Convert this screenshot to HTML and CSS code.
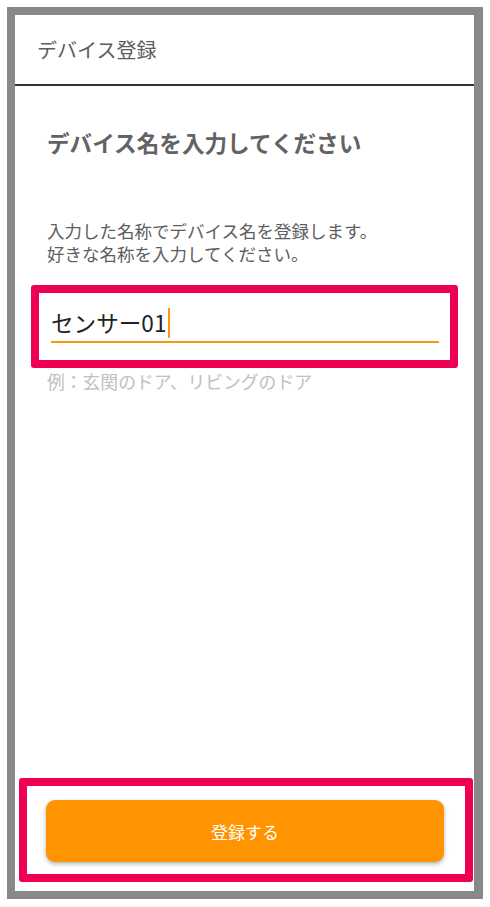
FILE: index.html
```html
<!DOCTYPE html>
<html lang="ja">
<head>
<meta charset="utf-8">
<title>デバイス登録</title>
<link rel="stylesheet" href="styles.css">
</head>
<body>
<div class="frame">
  <div class="screen">
    <header class="appbar">デバイス登録</header>
    <main class="content">
      <h1 class="heading">デバイス名を入力してください</h1>
      <div class="desc">
        <p class="desc-line">入力した名称でデバイス名を登録します。</p>
        <p class="desc-line">好きな名称を入力してください。</p>
      </div>
      <div class="mark field-mark">
        <div class="field">
          <span class="value">センサー01</span><span class="caret"></span>
        </div>
      </div>
      <p class="hint">例：玄関のドア、リビングのドア</p>
    </main>
    <div class="mark footer-mark">
      <button class="submit" type="button">登録する</button>
    </div>
  </div>
</div>
</body>
</html>
```

FILE: styles.css
```css
* { box-sizing: border-box; }
html, body {
  margin: 0;
  padding: 0;
  background: #ffffff;
}
body {
  width: 490px;
  height: 907px;
  font-family: "Noto Sans CJK JP", "Noto Sans", sans-serif;
}
.frame {
  position: relative;
  margin: 7px 0 0 7px;
  width: 476px;
  height: 892px;
  border-style: solid;
  border-color: #898989;
  border-width: 8px 9px 8px 8px;
  background: #ffffff;
}
.screen {
  display: flex;
  flex-direction: column;
  height: 100%;
}
.appbar {
  height: 71px;
  flex: none;
  display: flex;
  align-items: center;
  padding-left: 22px;
  padding-bottom: 1px;
  font-size: 20px;
  color: #5c5c5c;
  border-bottom: 2px solid #333333;
}
.content {
  flex: 1;
  padding: 42px 16px 0 16px;
}
.heading {
  margin: 0;
  padding-left: 16px;
  font-size: 22.6px;
  line-height: 30px;
  font-weight: 700;
  color: #636363;
}
.desc {
  margin: 62px 0 0 0;
  padding-left: 16px;
  display: flex;
  flex-direction: column;
  gap: 0;
}
.desc-line {
  margin: 0;
  font-size: 17.5px;
  line-height: 22.5px;
  color: #5e5e5e;
}
.mark {
  border: 8px solid #ee0055;
  border-radius: 3px;
}
.field-mark {
  margin-top: 20px;
  height: 83px;
  padding: 15px 11px 0 12px;
}
.field {
  display: flex;
  align-items: center;
  height: 35px;
  padding-bottom: 3px;
  border-bottom: 2px solid #f59a12;
}
.value {
  font-size: 22.6px;
  line-height: 30px;
  color: #222222;
}
.caret {
  display: block;
  width: 2px;
  height: 30px;
  margin-left: 2px;
  background: #f59a12;
}
.hint {
  margin: 1px 0 0 0;
  padding-left: 16px;
  font-size: 17.8px;
  line-height: 24px;
  color: #c0c0c0;
}
.footer-mark {
  flex: none;
  margin: 0 1px 9px 4px;
  height: 104px;
  padding: 14px 21px 0 19px;
}
.submit {
  display: block;
  width: 398px;
  height: 62px;
  border: none;
  border-radius: 9px;
  background: #ff9300;
  color: #ffffff;
  font-family: "Noto Sans CJK JP", "Noto Sans", sans-serif;
  font-size: 17px;
  box-shadow: 0 2px 4px rgba(0, 0, 0, 0.3);
}
```
